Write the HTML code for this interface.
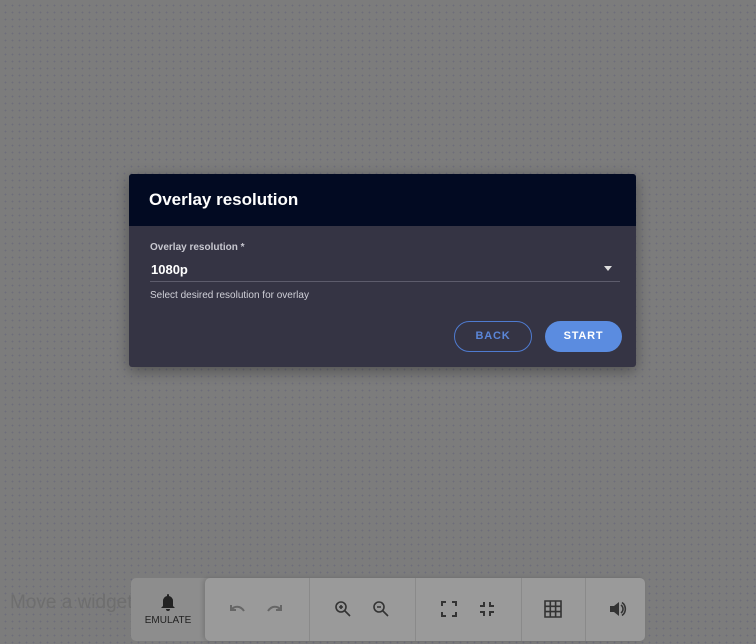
<!DOCTYPE html>
<html><head><style>
body{margin:0;width:756px;height:644px;overflow:hidden;position:relative;font-family:"Liberation Sans",sans-serif;
background-color:#7c7c7c;background-image:radial-gradient(circle,#6d6d7a 0.7px,transparent 1.1px);background-size:7px 7px;background-position:2px 2px}
.dlg{position:absolute;left:129px;top:174px;width:507px;height:193px;background:#353444;border-radius:3px;box-shadow:0 4px 14px rgba(0,0,0,.35);overflow:hidden}
.hd{height:52px;background:#020a22;color:#fff;font-size:17px;font-weight:bold;line-height:52px;padding-left:20px}
.lbl{position:absolute;left:21px;top:68px;font-size:10px;color:#c8c8d0;font-weight:bold}
.val{position:absolute;left:22px;top:88px;font-size:13px;color:#fff;font-weight:bold}
.line{position:absolute;left:21px;top:107px;width:470px;height:1px;background:#5d5c6c}
.arr{position:absolute;left:475px;top:92px;width:0;height:0;border-left:4.5px solid transparent;border-right:4.5px solid transparent;border-top:5px solid #ddd}
.help{position:absolute;left:21px;top:116px;font-size:10px;color:#d0d0d8}
.btn{position:absolute;top:147px;height:31px;border-radius:16px;font-size:11px;font-weight:bold;letter-spacing:.8px;text-align:center;line-height:31px;box-sizing:border-box}
.back{left:325px;width:78px;border:1.5px solid #4f7bd0;color:#5b86d8;line-height:28px}
.start{left:416px;width:77px;background:#5b8ce0;color:#fff}
.mv{position:absolute;left:10px;top:592px;font-size:19px;color:#6e6e6e}
.tb1{position:absolute;left:131px;top:578px;width:80px;height:63px;background:#8d8d8d;border-radius:5px 0 0 5px}
.tb2{position:absolute;left:205px;top:578px;width:440px;height:63px;background:#9a9a9a;border-radius:5px;box-shadow:-2px 0 4px rgba(0,0,0,.15)}
.sep{position:absolute;top:0;width:1px;height:63px;background:#8a8a8a}
.ic{position:absolute}
</style></head><body>
<div class="dlg">
<div class="hd">Overlay resolution</div>
<div class="lbl">Overlay resolution *</div>
<div class="val">1080p</div>
<div class="arr"></div>
<div class="line"></div>
<div class="help">Select desired resolution for overlay</div>
<div class="btn back">BACK</div>
<div class="btn start">START</div>
</div>
<div class="mv">Move a widget</div>
<div class="tb1">
<svg class="ic" style="left:29px;top:15px" width="16" height="18" viewBox="0 0 16 18"><path d="M8 1a1 1 0 0 1 1 1v1a5 5 0 0 1 4 5v5l2 2H1l2-2V8a5 5 0 0 1 4-5V2a1 1 0 0 1 1-1z M6 16h4a2 2 0 0 1-4 0z" fill="#222"/></svg>
<div style="position:absolute;left:0;width:74px;top:37px;text-align:center;font-size:10px;color:#222">EMULATE</div>
</div>
<div class="tb2">
<div class="sep" style="left:104px"></div><div class="sep" style="left:210px"></div><div class="sep" style="left:316px"></div><div class="sep" style="left:380px"></div>
<svg class="ic" style="left:22px;top:24px" width="20" height="14" viewBox="0 0 20 14"><path d="M4 3v5h5 M4 8c3-4 9-5 13 1" fill="none" stroke="#666" stroke-width="2"/></svg>
<svg class="ic" style="left:60px;top:24px" width="20" height="14" viewBox="0 0 20 14"><path d="M16 3v5h-5 M16 8c-3-4-9-5-13 1" fill="none" stroke="#666" stroke-width="2"/></svg>
<svg class="ic" style="left:129px;top:22px" width="18" height="18" viewBox="0 0 18 18"><circle cx="7" cy="7" r="5" fill="none" stroke="#333" stroke-width="1.6"/><path d="M11 11l5 5M5 7h4M7 5v4" stroke="#333" stroke-width="1.6"/></svg>
<svg class="ic" style="left:167px;top:22px" width="18" height="18" viewBox="0 0 18 18"><circle cx="7" cy="7" r="5" fill="none" stroke="#333" stroke-width="1.6"/><path d="M11 11l5 5M5 7h4" stroke="#333" stroke-width="1.6"/></svg>
<svg class="ic" style="left:236px;top:23px" width="16" height="16" viewBox="0 0 16 16"><path d="M1 5V1h4M11 1h4v4M15 11v4h-4M5 15H1v-4" fill="none" stroke="#333" stroke-width="2"/></svg>
<svg class="ic" style="left:274px;top:23px" width="16" height="16" viewBox="0 0 16 16"><path d="M5 1v4H1M15 5h-4V1M11 15v-4h4M1 11h4v4" fill="none" stroke="#333" stroke-width="2"/></svg>
<svg class="ic" style="left:339px;top:22px" width="18" height="18" viewBox="0 0 18 18"><path d="M1 1h16v16H1zM1 6.3h16M1 11.6h16M6.3 1v16M11.6 1v16" fill="none" stroke="#333" stroke-width="1.6"/></svg>
<svg class="ic" style="left:404px;top:23px" width="18" height="16" viewBox="0 0 18 16"><path d="M1 5h4l5-4v14l-5-4H1z" fill="#333"/><path d="M12 4a5 5 0 0 1 0 8M13 1.5a8 8 0 0 1 0 13" fill="none" stroke="#333" stroke-width="1.6"/></svg>
</div>
</body></html>
